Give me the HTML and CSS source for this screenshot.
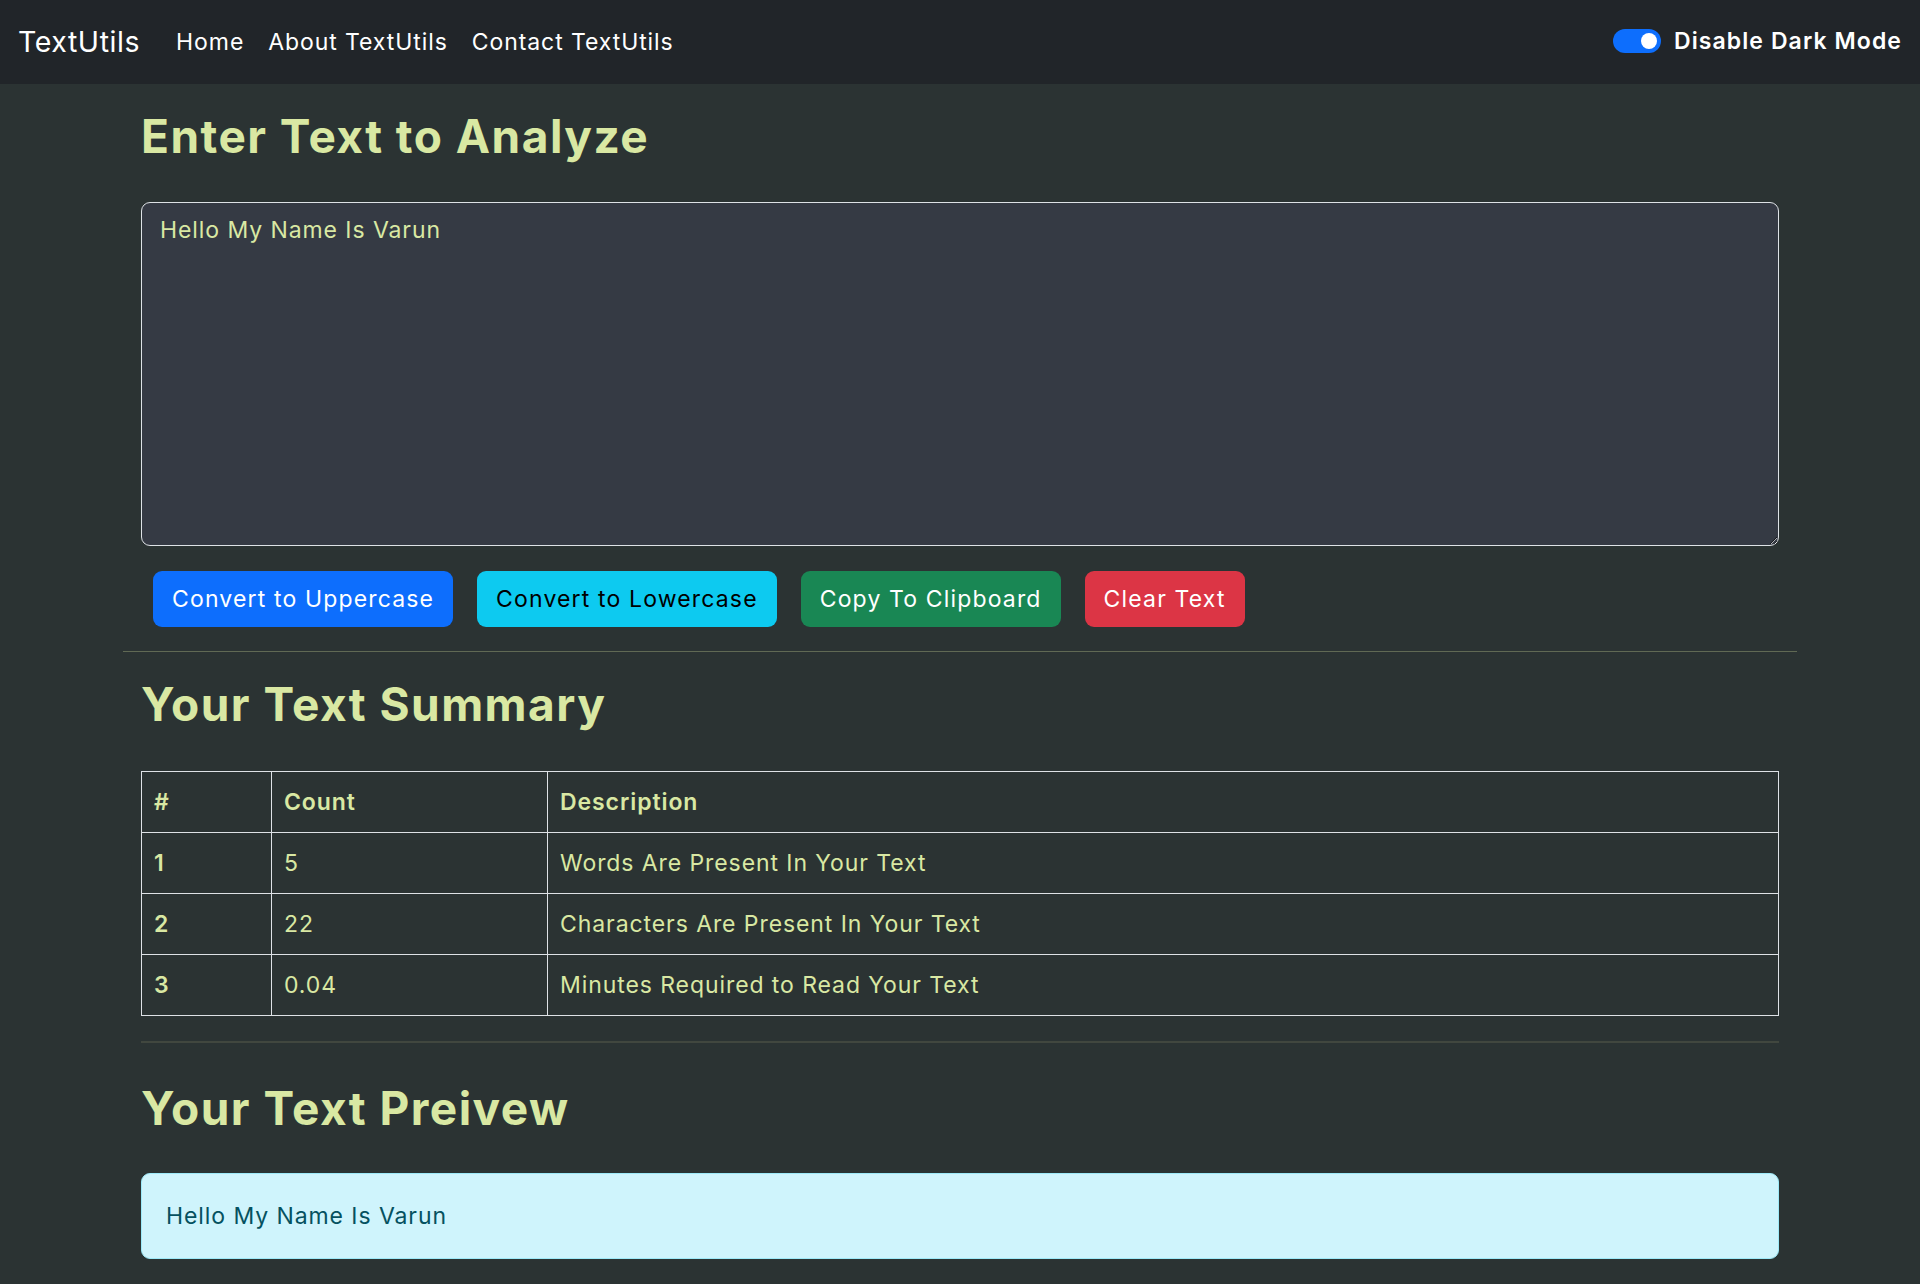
FILE: index.html
```html
<!DOCTYPE html>
<html lang="en">
<head>
<meta charset="utf-8">
<title>TextUtils</title>
<link rel="stylesheet" href="styles.css">
</head>
<body>
<nav class="navbar">
  <div class="nav-left">
    <a class="brand" href="#">TextUtils</a>
    <ul class="nav-links">
      <li><a href="#">Home</a></li>
      <li><a href="#">About TextUtils</a></li>
      <li><a href="#">Contact TextUtils</a></li>
    </ul>
  </div>
  <label class="mode-switch">
    <span class="switch"></span>
    <span class="switch-label">Disable Dark Mode</span>
  </label>
</nav>

<main class="outer">
  <section class="inner">
    <h2 class="title title-first">Enter Text to Analyze</h2>
    <textarea class="text-input">Hello My Name Is Varun</textarea>
    <div class="btn-row">
      <button class="btn btn-primary">Convert to Uppercase</button>
      <button class="btn btn-info">Convert to Lowercase</button>
      <button class="btn btn-success">Copy To Clipboard</button>
      <button class="btn btn-danger">Clear Text</button>
    </div>
  </section>
  <hr class="rule rule-wide">
  <section class="inner">
    <h2 class="title title-summary">Your Text Summary</h2>
    <table class="summary">
      <thead>
        <tr><th class="col-num">#</th><th class="col-count">Count</th><th>Description</th></tr>
      </thead>
      <tbody>
        <tr><th>1</th><td>5</td><td>Words Are Present In Your Text</td></tr>
        <tr><th>2</th><td>22</td><td>Characters Are Present In Your Text</td></tr>
        <tr><th>3</th><td>0.04</td><td>Minutes Required to Read Your Text</td></tr>
      </tbody>
    </table>
    <hr class="rule">
    <h2 class="title title-preview">Your Text Preivew</h2>
    <div class="preview">Hello My Name Is Varun</div>
  </section>
</main>
</body>
</html>
```
FILE: styles.css
```css
* { box-sizing: border-box; }
html, body { margin: 0; padding: 0; }
body {
  background: #2b3333;
  color: #d9e8a3;
  font-family: Inter, "Noto Sans", sans-serif;
  font-size: 23px;
  line-height: 36px;
  letter-spacing: 0.04em;
  overflow: hidden;
  height: 1284px;
}

.navbar {
  height: 84px;
  background: #212529;
  display: flex;
  align-items: center;
  justify-content: space-between;
  padding: 0 18px;
}
.nav-left { display: flex; align-items: center; }
.brand {
  color: #fff;
  text-decoration: none;
  font-size: 28.5px;
  letter-spacing: 0.02em;
  margin-right: 24px;
}
.nav-links {
  list-style: none;
  margin: 0;
  padding: 0;
  display: flex;
}
.nav-links a {
  display: block;
  color: #fff;
  text-decoration: none;
  padding: 0 12px;
}
.mode-switch {
  display: flex;
  align-items: center;
  gap: 13px;
  color: #fff;
  font-weight: 600;
  letter-spacing: 0.047em;
  margin-top: -3px;
}
.switch {
  position: relative;
  width: 48px;
  height: 24px;
  border-radius: 12px;
  background: #0d6efd;
}
.switch::after {
  content: "";
  position: absolute;
  right: 4px;
  top: 4px;
  width: 16px;
  height: 16px;
  border-radius: 50%;
  background: #fff;
}

.outer {
  max-width: 1710px;
  margin: 0 auto;
  padding: 0 18px;
}
.inner { padding: 0 18px; }

.title {
  margin: 0;
  font-size: 46px;
  line-height: 58px;
  font-weight: 700;
  letter-spacing: 0.032em;
  color: #d9e8a3;
}
.title-first { margin: 23px 0 37px; }
.title-summary { margin: 23px 0 38px; }
.title-preview { margin: 36px 0 36px; }

.text-input {
  display: block;
  width: 100%;
  height: 344px;
  margin: 0 0 25px;
  padding: 9px 18px;
  background: #353a44;
  color: #d9e8a3;
  border: 1.5px solid #dee2e6;
  border-radius: 9px;
  font: inherit;
  letter-spacing: inherit;
  line-height: 36px;
  resize: vertical;
}

.btn-row {
  display: flex;
  gap: 24px;
  padding: 0 12px;
}
.btn {
  font: inherit;
  letter-spacing: 0.05em;
  line-height: 36px;
  padding: 9px 18px;
  border: 1.5px solid transparent;
  border-radius: 9px;
  color: #fff;
}
.btn-primary { background: #0d6efd; }
.btn-info { background: #0dcaf0; color: #000; }
.btn-success { background: #198754; }
.btn-danger { background: #dc3545; }

.rule {
  border: 0;
  height: 1px;
  margin: 0;
  background: rgba(217, 232, 163, 0.3);
}
.rule-wide { margin-top: 24px; }
.inner .rule { margin-top: 25px; height: 2px; background: #41473f; }

.summary {
  width: 100%;
  border-collapse: collapse;
  color: #d9e8a3;
}
.summary th, .summary td {
  border: 1px solid #dee2e6;
  padding: 12px 12px;
  line-height: 36px;
  text-align: left;
  vertical-align: top;
}
.summary th { font-weight: 600; }
.summary td { font-weight: 400; }
.col-num { width: 130px; }
.col-count { width: 276px; }

.preview {
  background: #cff4fc;
  border: 1.5px solid #9eeaf9;
  border-radius: 9px;
  color: #055160;
  padding: 24px;
  line-height: 36px;
}
```
